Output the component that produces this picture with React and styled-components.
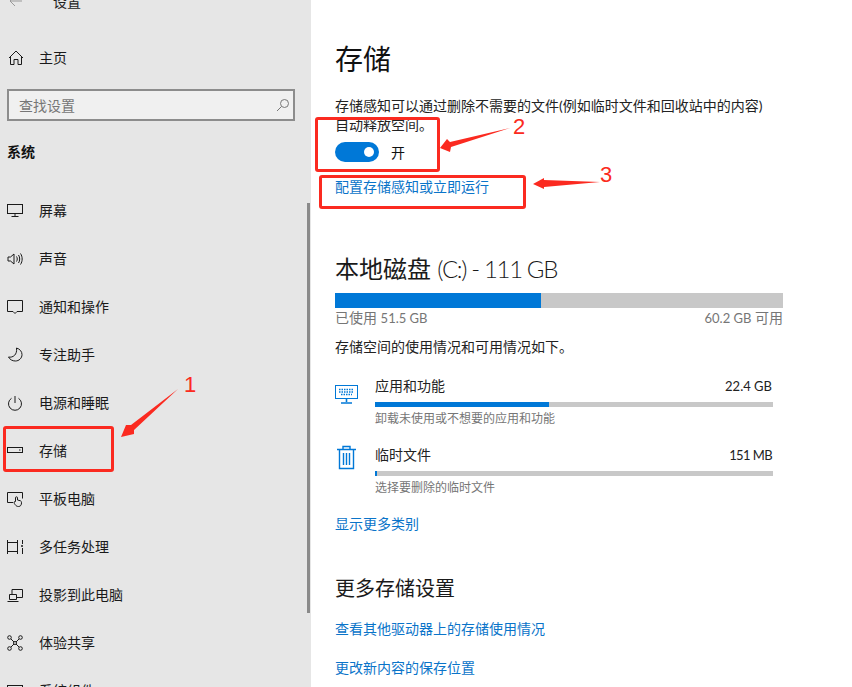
import React from 'react'
import styled, { createGlobalStyle } from 'styled-components'

const GlobalStyle = createGlobalStyle`
  html, body {
    margin: 0;
    padding: 0;
    background: #fff;
  }
  * { box-sizing: border-box; }
`

const Page = styled.div`
  position: relative;
  display: flex;
  width: 852px;
  height: 687px;
  overflow: hidden;
  font-family: Lato, "Noto Sans CJK SC", sans-serif;
  font-size: 14px;
  color: #111;
`

const Sidebar = styled.aside`
  position: relative;
  flex: 0 0 311px;
  height: 687px;
  overflow: hidden;
  background: #e6e6e6;
`

const TitleBar = styled.div`
  display: flex;
  align-items: center;
  height: 32px;
  margin-top: -15px;
  padding-left: 9px;
  gap: 30px;
  color: #222;
  svg { color: #999; }
`

const NavRow = styled.div`
  display: flex;
  align-items: center;
  gap: 16px;
  height: 48px;
  padding-left: 7px;
  color: #1a1a1a;
  line-height: 20px;
  white-space: nowrap;
  flex: 0 0 48px;
`

const HomeRow = styled(NavRow)`
  margin-top: 17px;
  padding-left: 8px;
  gap: 15px;
`

const SearchBox = styled.div`
  display: flex;
  align-items: center;
  justify-content: space-between;
  width: 288px;
  height: 32px;
  margin: 7px 0 0 7px;
  padding: 0 3px 0 10px;
  background: #f0f0f0;
  border: 2px solid #8c8c8c;
  color: #767676;
`

const GroupTitle = styled.div`
  margin: 21px 0 0 7px;
  height: 20px;
  line-height: 20px;
  font-weight: 700;
  font-size: 14px;
  color: #111;
`

const NavList = styled.div`
  display: flex;
  flex-direction: column;
  margin-top: 25px;
`

const ScrollThumb = styled.div`
  position: absolute;
  left: 307px;
  top: 203px;
  width: 3px;
  height: 410px;
  background: #8a8a8a;
`

const Main = styled.main`
  flex: 1;
  height: 687px;
  overflow: hidden;
  padding: 0 69px 0 24px;
  background: #fff;
`

const PageTitle = styled.h1`
  margin: 38px 0 0;
  height: 42px;
  line-height: 42px;
  font-size: 28px;
  font-weight: 400;
  color: #111;
`

const Paragraph = styled.p`
  margin: 16px 0 0;
  width: 440px;
  line-height: 19px;
  color: #222;
`

const ToggleRow = styled.div`
  display: flex;
  align-items: center;
  gap: 12px;
  margin-top: 8px;
  height: 20px;
`

const Toggle = styled.div`
  display: flex;
  align-items: center;
  justify-content: flex-end;
  width: 44px;
  height: 20px;
  padding-right: 5px;
  border-radius: 10px;
  background: #0078d7;
  &::after {
    content: '';
    width: 10px;
    height: 10px;
    border-radius: 50%;
    background: #fff;
  }
`

const LinkText = styled.a`
  display: block;
  height: 20px;
  line-height: 20px;
  color: #0a74c9;
  margin-top: ${p => p.$top || 0}px;
  white-space: nowrap;
`

const DiskTitle = styled.h2`
  margin: 54px 0 0;
  height: 36px;
  line-height: 36px;
  font-size: 24px;
  font-weight: 400;
  color: #1a1a1a;
  white-space: nowrap;
`

const DiskSize = styled.span`
  font-weight: 300;
  letter-spacing: -1.35px;
`

const Num = styled.span`
  font-size: 13px;
  letter-spacing: ${p => p.$ls || 0}px;
`

const Bar = styled.div`
  width: ${p => p.$width}px;
  height: ${p => p.$height}px;
  margin-top: ${p => p.$top || 0}px;
  background: #c8c8c8;
  div {
    height: 100%;
    background: #0078d7;
  }
`

const BarLegend = styled.div`
  display: flex;
  justify-content: space-between;
  width: 448px;
  height: 20px;
  margin-top: 0;
  line-height: 20px;
  color: #767676;
  font-size: 14px;
`

const Summary = styled.div`
  margin-top: 9px;
  height: 20px;
  line-height: 20px;
  color: #222;
`

const UsageRow = styled.div`
  display: flex;
  gap: 17px;
  margin-top: ${p => p.$top}px;
`

const UsageIcon = styled.div`
  flex: 0 0 23px;
  padding-top: ${p => p.$pad}px;
  color: #0078d7;
  line-height: 0;
`

const UsageBody = styled.div`
  width: 398px;
`

const UsageHead = styled.div`
  display: flex;
  justify-content: space-between;
  height: 20px;
  line-height: 20px;
  padding-right: 1px;
  color: #222;
`

const UsageHint = styled.div`
  height: 18px;
  margin-top: 3px;
  line-height: 18px;
  font-size: 12px;
  color: #767676;
`

const SectionTitle = styled.h3`
  margin: 39px 0 0;
  height: 30px;
  line-height: 30px;
  font-size: 20px;
  font-weight: 400;
  color: #1a1a1a;
`

const Overlay = styled.svg`
  position: absolute;
  left: 0;
  top: 0;
  pointer-events: none;
`

const MarkBox = styled.div`
  position: absolute;
  left: ${p => p.$x}px;
  top: ${p => p.$y}px;
  width: ${p => p.$w}px;
  height: ${p => p.$h}px;
  border: 3px solid #fb2a20;
  border-radius: 3px;
  pointer-events: none;
`

const MarkNumber = styled.span`
  position: absolute;
  left: ${p => p.$x}px;
  top: ${p => p.$y}px;
  font-family: "Liberation Sans", sans-serif;
  font-size: 22px;
  line-height: 24px;
  color: #fb2a20;
`

const Ico = ({ children, w = 16, h = 16, vb = '0 0 16 16' }) => (
  <svg width={w} height={h} viewBox={vb} fill="none" stroke="currentColor" strokeWidth="1">
    {children}
  </svg>
)

const navItems = [
  ['屏幕', <><rect x="0.5" y="1.5" width="15" height="9" /><path d="M8 10.5v3M4.5 13.5h7" /></>],
  ['声音', <><path d="M1 6h2.5L7 3v10L3.5 10H1z" /><path d="M9.5 5.5c1 1.5 1 3.5 0 5M11.5 4c1.6 2.4 1.6 5.6 0 8M13.5 2.5c2.2 3.3 2.2 7.7 0 11" /></>],
  ['通知和操作', <path d="M0.5 1.5h15v11H10l-2 2-2-2H0.5z" />],
  ['专注助手', <path d="M9.5 1c3.5 1 5.5 3.6 5.5 6.6 0 3.6-3 6.4-6.6 6.4-3 0-5.5-1.4-6.9-4 4.5 1 9-2.5 8-9z" />],
  ['电源和睡眠', <><path d="M8 1v7" /><path d="M4.5 3.3a6.5 6.5 0 1 0 7 0" /></>],
  ['存储', <><rect x="0.5" y="4.5" width="15" height="5" /><path d="M12 7h1.5" /></>],
  ['平板电脑', <><path d="M6 11.5H0.5v-10h15v6" /><path d="M8.5 14c-1-1-1.5-2-1.5-3l1.5-.5V6.8a1 1 0 0 1 2 0V9l3 .8c.8.3 1 1 1 2 0 2-.8 3.7-3 3.7-1.5 0-2.4-.6-3-1.5z" /></>],
  ['多任务处理', <><path d="M0.5 1v14M0.5 3.5h10M0.5 12.5h10M10.5 1v14M15.5 1v4M15.5 9v6" /><circle cx="15" cy="7" r="1" fill="currentColor" stroke="none" /></>],
  ['投影到此电脑', <><path d="M5 7V2.5h10.5v8H10" /><path d="M2.5 7.5h7v5h-7zM0.5 14.5h11" /></>],
  ['体验共享', <><circle cx="2.5" cy="2.5" r="1.8" /><circle cx="13.5" cy="2.5" r="1.8" /><circle cx="2.5" cy="13.5" r="1.8" /><circle cx="13.5" cy="13.5" r="1.8" /><circle cx="8" cy="8" r="1.5" /><path d="M4 4l3 3M12 4L9 7M4 12l3-3M12 12L9 9" /></>],
  ['系统组件', <><rect x="0.5" y="2.5" width="15" height="11" /><path d="M0.5 5.5h15" /></>],
]

const App = () => {
  return (
    <Page>
      <GlobalStyle />
      <Sidebar>
        <TitleBar>
          <Ico w={14} h={14} vb="0 0 14 14"><path d="M13 7H1M6 2L1 7l5 5" /></Ico>
          <span>设置</span>
        </TitleBar>
        <HomeRow>
          <Ico><path d="M1 8l7-7 7 7M2.5 6.5v8h3.5V9.5h4v5h3.5v-8" /></Ico>
          主页
        </HomeRow>
        <SearchBox>
          <span>查找设置</span>
          <Ico w={14} h={14} vb="0 0 14 14">
            <circle cx="8.5" cy="5.5" r="4" stroke="#777" />
            <path d="M5.5 8.5L1 13" stroke="#777" />
          </Ico>
        </SearchBox>
        <GroupTitle>系统</GroupTitle>
        <NavList>
          {navItems.map(([label, icon]) => (
            <NavRow key={label}>
              <Ico>{icon}</Ico>
              {label}
            </NavRow>
          ))}
        </NavList>
        <ScrollThumb />
      </Sidebar>

      <Main>
        <PageTitle>存储</PageTitle>
        <Paragraph>存储感知可以通过删除不需要的文件(例如临时文件和回收站中的内容)自动释放空间。</Paragraph>
        <ToggleRow>
          <Toggle />
          <span>开</span>
        </ToggleRow>
        <LinkText $top={15}>配置存储感知或立即运行</LinkText>

        <DiskTitle>本地磁盘 <DiskSize>(C:) - 111 GB</DiskSize></DiskTitle>
        <Bar $width={448} $height={15} $top={6}>
          <div style={{ width: `${(51.5 / 111) * 100 - 0.4}%` }} />
        </Bar>
        <BarLegend>
          <span>已使用 <Num>51.5 GB</Num></span>
          <span><Num>60.2 GB</Num> 可用</span>
        </BarLegend>
        <Summary>存储空间的使用情况和可用情况如下。</Summary>

        <UsageRow $top={19}>
          <UsageIcon $pad={9}>
            <Ico w={23} h={19} vb="0 0 23 19">
              <rect x="0.5" y="0.5" width="22" height="13" />
              <path d="M11.5 14v3M6 18h11" strokeWidth="1.6" />
              <path d="M4 4.5h15M4 7h15M6 9.5h11" strokeWidth="1.4" strokeDasharray="1.5 1" />
            </Ico>
          </UsageIcon>
          <UsageBody>
            <UsageHead><span>应用和功能</span><Num>22.4 GB</Num></UsageHead>
            <Bar $width={398} $height={5} $top={6}><div style={{ width: '43.6%' }} /></Bar>
            <UsageHint>卸载未使用或不想要的应用和功能</UsageHint>
          </UsageBody>
        </UsageRow>

        <UsageRow $top={17}>
          <UsageIcon $pad={-1}>
            <Ico w={23} h={25} vb="0 0 23 25">
              <path d="M2 4.5h19M8 4.5V1.5h7v3" strokeWidth="1.4" />
              <path d="M4.5 4.5v19h14v-19" strokeWidth="1.4" />
              <path d="M8.5 8v12M11.5 8v12M14.5 8v12" strokeWidth="1.4" />
            </Ico>
          </UsageIcon>
          <UsageBody>
            <UsageHead><span>临时文件</span><Num $ls={-0.6}>151 MB</Num></UsageHead>
            <Bar $width={398} $height={5} $top={6}><div style={{ width: '2px' }} /></Bar>
            <UsageHint>选择要删除的临时文件</UsageHint>
          </UsageBody>
        </UsageRow>

        <LinkText $top={17}>显示更多类别</LinkText>
        <SectionTitle>更多存储设置</SectionTitle>
        <LinkText $top={16}>查看其他驱动器上的存储使用情况</LinkText>
        <LinkText $top={19}>更改新内容的保存位置</LinkText>
      </Main>

      <MarkBox $x={3} $y={426} $w={111} $h={46} />
      <MarkBox $x={315} $y={117} $w={125} $h={55} />
      <MarkBox $x={319} $y={175} $w={207} $h={34} />
      <Overlay width="852" height="687" viewBox="0 0 852 687">
        <path d="M178 389L131 425L126 425L121 437L134 434L134 430Z" fill="#fb2a20" />
        <path d="M510 128L450 142L447 139L440 148L450 152L451 147Z" fill="#fb2a20" />
        <path d="M600 182L544 180L544 178L533 184L544 189L544 187Z" fill="#fb2a20" />
      </Overlay>
      <MarkNumber $x={184} $y={373}>1</MarkNumber>
      <MarkNumber $x={513} $y={115}>2</MarkNumber>
      <MarkNumber $x={600} $y={163}>3</MarkNumber>
    </Page>
  )
}

export default App
